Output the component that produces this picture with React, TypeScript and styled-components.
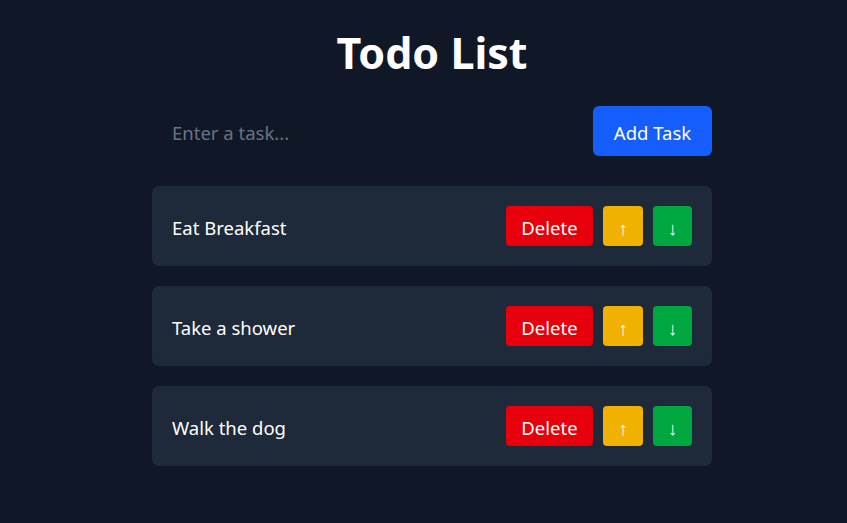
import React, { useState } from "react";
import styled, { createGlobalStyle } from "styled-components";

const Global = createGlobalStyle`
  html, body { margin: 0; padding: 0; background: #101828; }
  body { font-family: "Noto Sans", "Open Sans", sans-serif; }
  * { box-sizing: border-box; }
`;

const Page = styled.div`
  min-height: 523px;
  background: #101828;
  display: flex;
  flex-direction: column;
  align-items: center;
  padding: 25px 0 0 17px;
`;

const Title = styled.h1`
  margin: 0;
  font-size: 43px;
  line-height: 56px;
  font-weight: 700;
  color: #ffffff;
`;

const Panel = styled.div`
  width: 560px;
  margin-top: 25px;
  display: flex;
  flex-direction: column;
`;

const InputRow = styled.div`
  display: flex;
  gap: 8px;
  height: 50px;
  margin-bottom: 30px;
`;

const TaskInput = styled.input`
  flex: 1;
  background: transparent;
  border: none;
  outline: none;
  color: #fff;
  font-family: inherit;
  font-size: 18.5px;
  padding: 2px 20px 0;
  &::placeholder { color: #6a7282; }
`;

const AddButton = styled.button`
  width: 119px;
  border: none;
  border-radius: 6px;
  background: #155dfc;
  color: #fff;
  font-family: inherit;
  font-size: 18.5px;
  padding: 2px 0 0;
`;

const List = styled.div`
  display: flex;
  flex-direction: column;
  gap: 20px;
`;

const Row = styled.div`
  height: 80px;
  background: #1e2939;
  border-radius: 7px;
  padding: 0 20px;
  display: flex;
  align-items: center;
  justify-content: space-between;
`;

const TaskText = styled.span`
  color: #fff;
  font-size: 18.5px;
  padding-top: 2px;
`;

const Actions = styled.div`
  display: flex;
  gap: 10px;
`;

const ActionButton = styled.button<{ $bg: string; $w: number }>`
  width: ${(p) => p.$w}px;
  height: 40px;
  border: none;
  border-radius: 4px;
  background: ${(p) => p.$bg};
  color: #fff;
  font-family: inherit;
  font-size: 18.5px;
  padding: 2px 0 0;
  display: flex;
  align-items: center;
  justify-content: center;
`;

export default function App() {
  const [tasks] = useState(["Eat Breakfast", "Take a shower", "Walk the dog"]);
  return (
    <>
      <Global />
      <Page>
        <Title>Todo List</Title>
        <Panel>
          <InputRow>
            <TaskInput placeholder="Enter a task..." />
            <AddButton>Add Task</AddButton>
          </InputRow>
          <List>
            {tasks.map((t) => (
              <Row key={t}>
                <TaskText>{t}</TaskText>
                <Actions>
                  <ActionButton $bg="#e7000b" $w={87}>Delete</ActionButton>
                  <ActionButton $bg="#f0b100" $w={40}>↑</ActionButton>
                  <ActionButton $bg="#00a63e" $w={39}>↓</ActionButton>
                </Actions>
              </Row>
            ))}
          </List>
        </Panel>
      </Page>
    </>
  );
}
